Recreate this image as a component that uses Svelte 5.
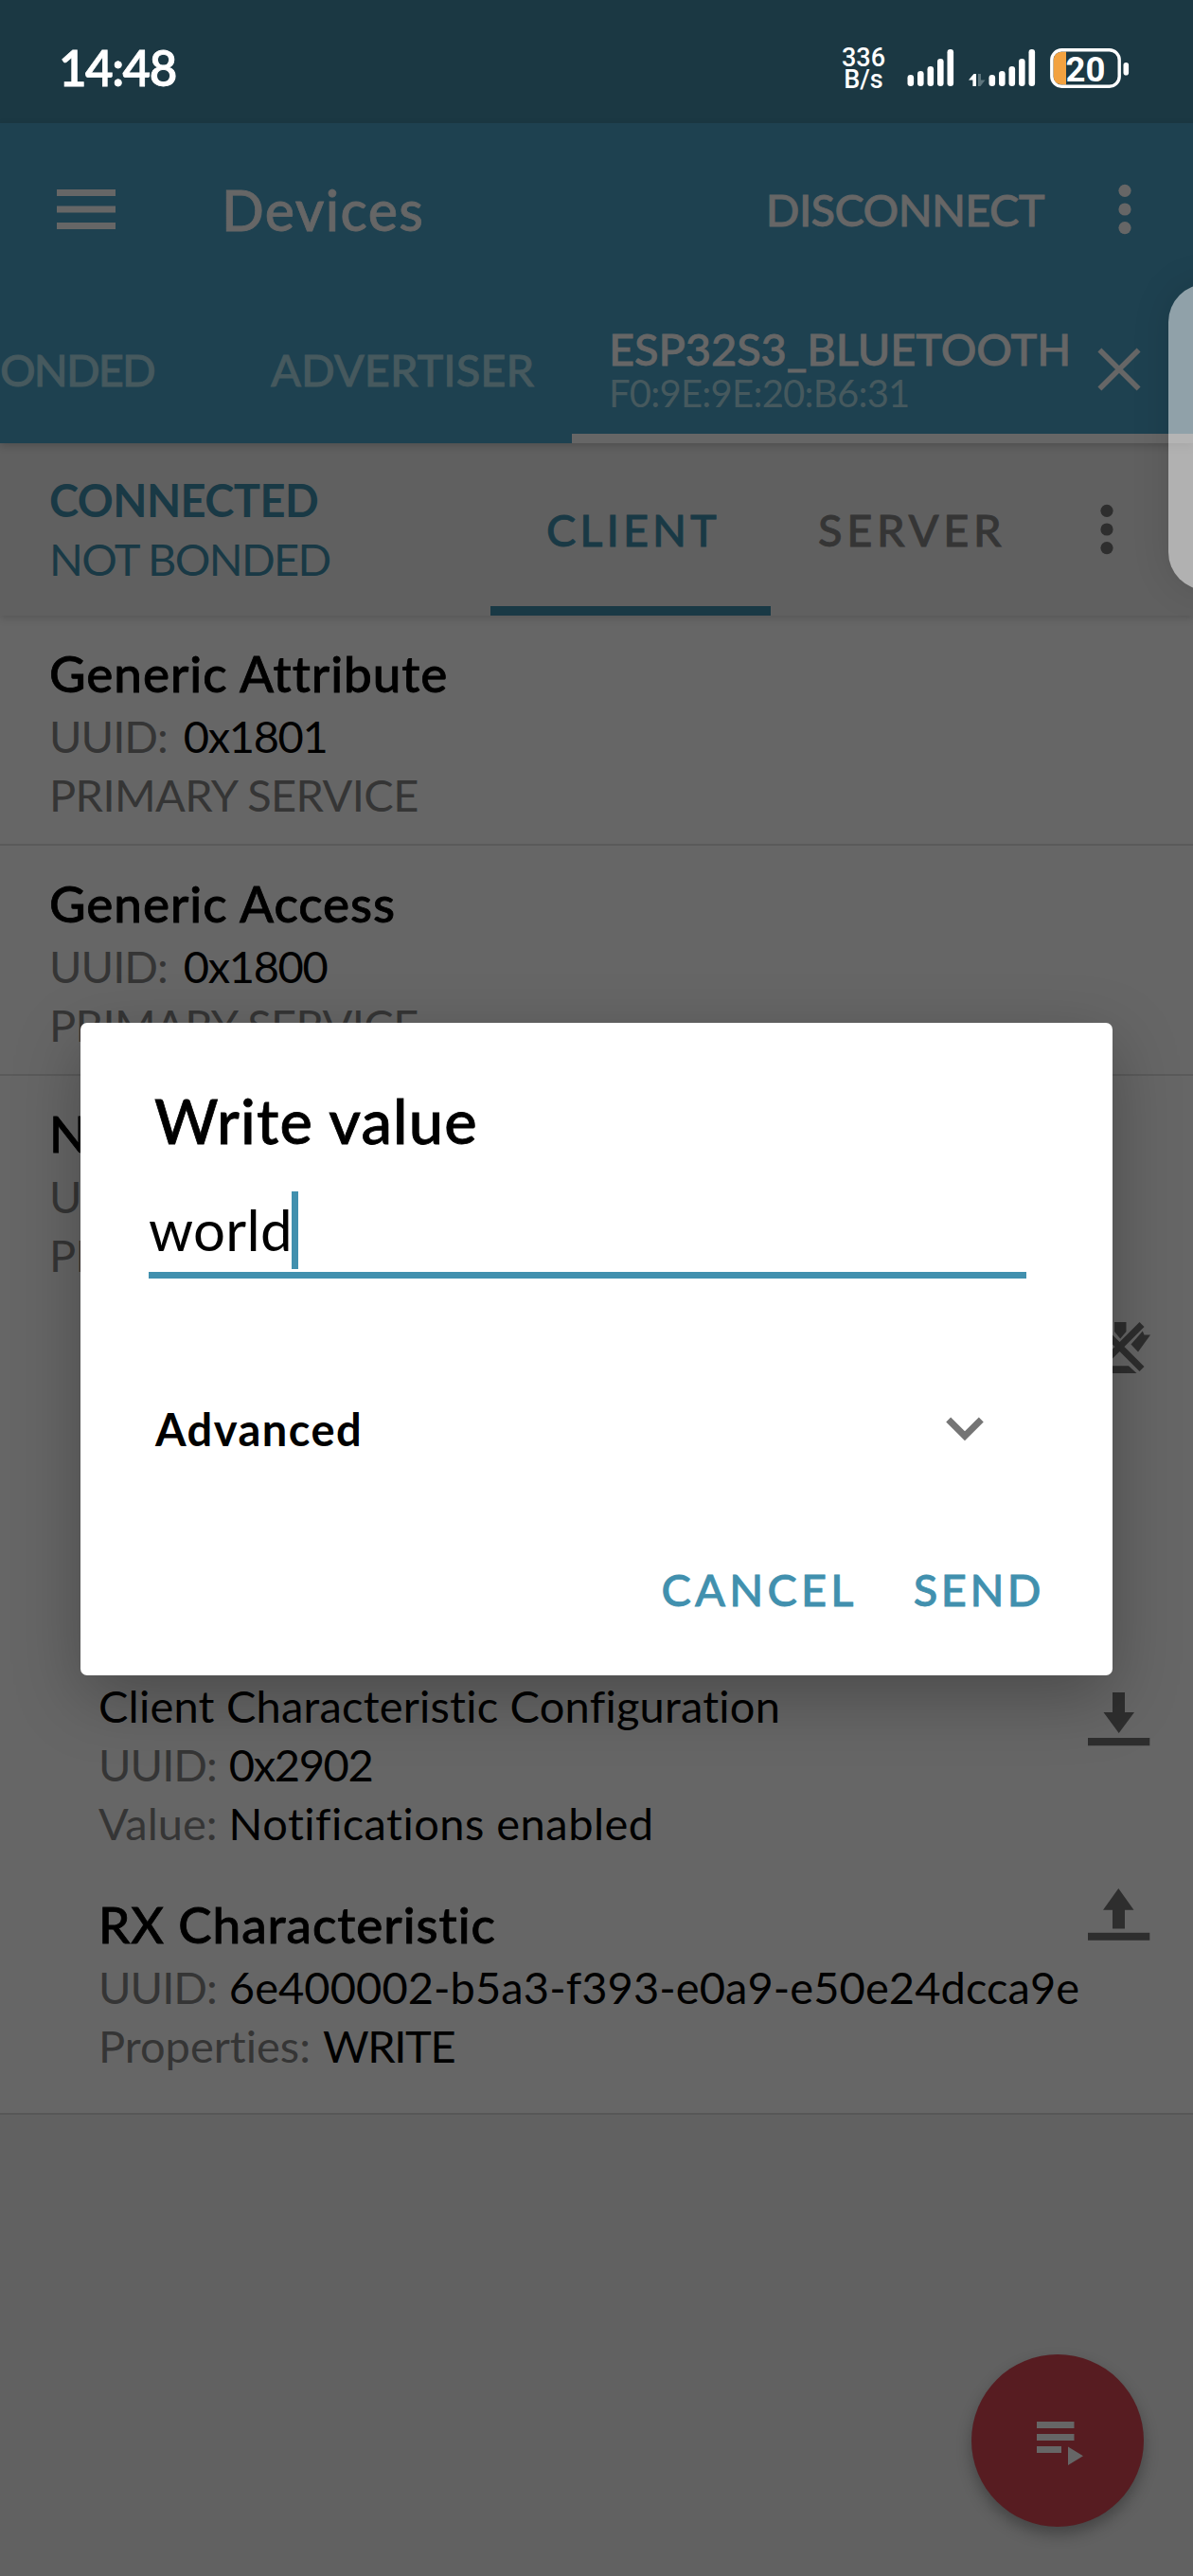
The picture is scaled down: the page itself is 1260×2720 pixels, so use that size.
<script>
  const services = [
    { name: 'Generic Attribute', uuid: '0x1801' },
    { name: 'Generic Access', uuid: '0x1800' }
  ];
  // Signal bars: [x, top] on a 40px tall grid
  const bars = [[0.5, 28], [11, 24], [21.5, 19], [32, 11], [42.5, 1]];
</script>

{#snippet signal()}
  <svg class="signal" width="50" height="40" viewBox="0 0 50 40">
    {#each bars as [x, y]}
      <rect {x} {y} width="6.6" height={40 - y} rx="3.2" fill="#fff" />
    {/each}
  </svg>
{/snippet}

{#snippet kebab(color)}
  <svg width="14" height="54" viewBox="0 0 14 54" fill={color}>
    <circle cx="7" cy="7.3" r="6.6" />
    <circle cx="7" cy="27" r="6.6" />
    <circle cx="7" cy="46.6" r="6.6" />
  </svg>
{/snippet}

<div class="screen">
  <div class="status">
    <span class="clock">14:48</span>
    <div class="net"><span>336</span><span>B/s</span></div>
    {@render signal()}
    <svg class="data" width="18" height="40" viewBox="0 0 18 40">
      <path d="M0 33.5 L5.5 27 H8 V40 H4.4 V33.5 Z" fill="#fff" />
      <path d="M10 27 H13 V33.5 H17.5 L12.5 40 H10 Z" fill="#5d747c" />
    </svg>
    {@render signal()}
    <svg class="battery" width="84" height="44" viewBox="0 0 84 44">
      <path d="M17 5.5 V40.5 H14 Q3.5 40.5 3.5 30 V16 Q3.5 5.5 14 5.5 Z" fill="#f2a240" />
      <rect x="1.8" y="3.8" width="71.4" height="38.4" rx="10.5" fill="none" stroke="#fff" stroke-width="3.4" />
      <rect x="77.5" y="17" width="5.6" height="13.5" rx="2.8" fill="#fff" />
      <text x="16.5" y="36.5">20</text>
    </svg>
  </div>

  <header>
    <div class="appbar">
      <svg width="62" height="42" viewBox="0 0 62 42" fill="#666">
        <rect width="62" height="7" />
        <rect y="17.5" width="62" height="7" />
        <rect y="35" width="62" height="7" />
      </svg>
      <h1>Devices</h1>
      <span class="disconnect">DISCONNECT</span>
      {@render kebab('#666')}
    </div>
    <nav>
      <span class="tab bonded">ONDED</span>
      <span class="tab advertiser">ADVERTISER</span>
      <div class="device">
        <div>
          <div class="device-name">ESP32S3_BLUETOOTH</div>
          <div class="mac">F0:9E:9E:20:B6:31</div>
        </div>
        <svg width="46" height="46" viewBox="0 0 46 46" stroke="#666" stroke-width="5.6">
          <path d="M2.4 2.4 L43.6 43.6 M43.6 2.4 L2.4 43.6" />
        </svg>
      </div>
    </nav>
  </header>

  <section class="subbar">
    <div class="state">
      <div class="connected">CONNECTED</div>
      <div class="not-bonded">NOT BONDED</div>
    </div>
    <div class="role client">CLIENT</div>
    <div class="role server">SERVER</div>
    {@render kebab('#2e2e2e')}
  </section>

  <main>
    {#each services as s}
      <article class="service">
        <h2>{s.name}</h2>
        <p class="row wide"><span class="label uu">UUID:</span><span class="short">{s.uuid}</span></p>
        <p class="label primary">PRIMARY SERVICE</p>
      </article>
    {/each}
    <article class="service open">
      <h2>Nordic UART Service</h2>
      <p class="row wide"><span class="label uu">UUID:</span></p>
      <p class="label primary">PRIMARY SERVICE</p>
    </article>

    <div class="notify">
      <svg width="66" height="58" viewBox="0 0 66 58" fill="#2e2e2e">
        <path d="M28 4 H40.5 V14 L34.2 21.5 L28 14 Z" />
        <path d="M57.8 13.5 L59.5 17.5 H66 L53 35.5 L45.5 27.5 Z" />
        <path d="M0 50.3 H43 L51.5 58 H0 Z" />
        <path d="M8 5 L57 54 M57 7 L8 56" stroke="#2e2e2e" stroke-width="7" transform="translate(0,-0.5)" />
      </svg>
    </div>

    <div class="attr">
      <div>
        <p class="descriptor">Client Characteristic Configuration</p>
        <p class="row"><span class="label uu">UUID:</span><span class="short">0x2902</span></p>
        <p class="row value"><span class="label">Value:</span><span class="note">Notifications enabled</span></p>
      </div>
      <svg class="down" width="66" height="57" viewBox="0 0 66 57" fill="#2e2e2e">
        <path d="M26 0 H39 V21 H49 L32.7 43 L16.5 21 H26 Z" />
        <rect y="48" width="65.3" height="8.2" />
      </svg>
    </div>

    <div class="attr rx">
      <div>
        <h2>RX Characteristic</h2>
        <p class="row"><span class="label uu">UUID:</span><span class="long">6e400002-b5a3-f393-e0a9-e50e24dcca9e</span></p>
        <p class="row"><span class="label">Properties:</span><span class="short">WRITE</span></p>
      </div>
      <svg class="up" width="66" height="56" viewBox="0 0 66 56" fill="#2e2e2e">
        <path d="M32.3 0 L48.5 22.7 H39 V42.5 H26 V22.7 H16 Z" />
        <rect y="46.8" width="65.3" height="8" />
      </svg>
    </div>
  </main>

  <div class="fab">
    <svg width="50" height="47" viewBox="0 0 50 47" fill="#666">
      <rect width="39.5" height="7" />
      <rect y="13" width="39.5" height="7" />
      <rect y="26" width="26" height="7" />
      <path d="M33 26.5 L49 36.2 L33 46 Z" />
    </svg>
  </div>

  <div class="edge-panel"></div>

  <div class="dialog">
    <h3>Write value</h3>
    <div class="field"><span>world</span><i class="cursor"></i></div>
    <div class="advanced">
      <span>Advanced</span>
      <svg width="40" height="26" viewBox="0 0 40 26" fill="none" stroke="#757575" stroke-width="7">
        <path d="M2.7 3 L20 20.3 L37.3 3" />
      </svg>
    </div>
    <div class="actions"><span class="cancel">CANCEL</span><span class="send">SEND</span></div>
  </div>
</div>

<style>
  :global(body) { margin: 0; }
  .screen {
    position: relative;
    width: 1260px;
    height: 2720px;
    overflow: hidden;
    background: #616161;
    font-family: Lato, "Liberation Sans", sans-serif;
    font-size: 47px;
    line-height: 62px;
    font-variant-ligatures: none;
    color: #000;
    white-space: nowrap;
  }
  h1, h2, h3, p { margin: 0; font-weight: 500; }
  p { font-weight: 400; }
  svg { display: block; flex: none; }

  /* Medium weight, slightly thickened */
  h1, h2, h3, .clock, .disconnect, .tab, .device-name, .role, .actions {
    -webkit-text-stroke: .8px currentColor;
  }

  .status {
    display: flex;
    align-items: center;
    box-sizing: border-box;
    height: 130px;
    padding: 12px 67px 0 62px;
    background: #1b3843;
    color: #fff;
  }
  .clock { padding-top: 2px; font-size: 51px; font-weight: 600; letter-spacing: -1.5px; }
  .net {
    display: flex;
    flex-direction: column;
    align-items: center;
    width: 46px;
    margin-left: auto;
    margin-right: 23px;
    padding-top: 3px;
    font: 500 27px/23px Roboto, sans-serif;
  }
  .data { margin: 0 3px 0 15px; }
  .battery { margin-left: 15px; }
  .battery text { font: 700 36.5px Roboto, sans-serif; fill: #fff; }

  header {
    position: relative;
    z-index: 2;
    height: 338px;
    background: #1e4150;
    color: #666;
    box-shadow: 0 3px 8px rgba(0, 0, 0, .18);
  }
  .appbar {
    display: flex;
    align-items: center;
    height: 182px;
    padding: 0 65px 0 60px;
  }
  h1 { margin-left: 112px; padding-top: 2px; font-size: 59px; letter-spacing: 1.4px; }
  .disconnect { margin-left: auto; margin-right: 78px; font-weight: 500; letter-spacing: -.64px; }
  nav { display: flex; height: 156px; }
  .tab { line-height: 156px; font-weight: 500; color: #46595e; }
  .bonded { width: 286px; letter-spacing: -1.89px; }
  .advertiser { width: 318px; }
  .device {
    display: flex;
    flex: 1;
    align-items: center;
    justify-content: space-between;
    box-sizing: border-box;
    padding: 10px 55px 0 39px;
    border-bottom: 10px solid #666;
  }
  .device-name { font-weight: 500; line-height: 50px; letter-spacing: -.1px; }
  .mac { font-size: 40px; line-height: 45px; letter-spacing: -.75px; color: #46595e; }

  .subbar {
    position: relative;
    z-index: 1;
    display: flex;
    align-items: center;
    box-sizing: border-box;
    height: 182px;
    padding: 0 84px 0 52px;
    background: #606060;
    color: #193945;
    box-shadow: 0 3px 8px rgba(0, 0, 0, .15);
  }
  .subbar > svg { margin-left: auto; }
  .state { width: 466px; }
  .connected { font-weight: 700; letter-spacing: -.55px; }
  .not-bonded { letter-spacing: -1.62px; }
  .role { box-sizing: border-box; height: 182px; line-height: 182px; font-weight: 500; }
  .client { width: 296px; padding-left: 59px; letter-spacing: 4px; border-bottom: 10px solid #193945; }
  .server { padding-left: 50px; letter-spacing: 4.69px; color: #353535; }

  main { height: 1581px; background: #666; border-bottom: 2px solid #575757; }
  .service { height: 213px; padding: 28px 0 0 52px; border-bottom: 2px solid #5a5a5a; }
  .open { height: 192px; border: 0; }
  h2 { margin-bottom: 2px; font-size: 53px; line-height: 66px; letter-spacing: .95px; }
  .label { color: #353535; }
  .uu { letter-spacing: -1px; }
  .primary { letter-spacing: -.6px; }
  .row { display: flex; gap: 13px; }
  .wide { gap: 17px; }
  .value { gap: 12px; }
  .short { letter-spacing: -1.35px; }
  .descriptor { letter-spacing: .22px; }
  .note { letter-spacing: .47px; }
  .long { letter-spacing: .08px; }
  .notify { display: flex; justify-content: flex-end; box-sizing: border-box; height: 414px; padding: 36px 45px 0 0; }
  .attr { display: flex; justify-content: space-between; align-items: flex-start; padding: 0 45px 0 104px; }
  .down { margin-top: 17px; }
  .rx { margin-top: 42.5px; }
  .rx .up { margin-top: -4.5px; margin-left: -40px; }

  .fab {
    position: absolute;
    left: 1026px;
    top: 2486px;
    display: flex;
    align-items: center;
    justify-content: center;
    box-sizing: border-box;
    width: 182px;
    height: 182px;
    padding: 7px 0 0 6px;
    border-radius: 50%;
    background: #571c21;
    box-shadow: 0 8px 16px rgba(0, 0, 0, .3);
  }
  .edge-panel {
    position: absolute;
    z-index: 3;
    left: 1234px;
    top: 300px;
    width: 80px;
    height: 323px;
    border-radius: 50px;
    background: rgba(255, 255, 255, .51);
    box-shadow: 0 0 40px rgba(0, 0, 0, .12);
  }

  .dialog {
    position: absolute;
    z-index: 4;
    left: 85px;
    top: 1080px;
    box-sizing: border-box;
    width: 1090px;
    height: 689px;
    padding: 63px 72px 0;
    border-radius: 7px;
    background: #fff;
    box-shadow: 0 22px 70px rgba(0, 0, 0, .27);
  }
  h3 { padding-left: 6px; font-size: 65px; line-height: 80px; letter-spacing: 1.2px; }
  .field {
    display: flex;
    width: 927px;
    height: 85px;
    margin-top: 35px;
    border-bottom: 7px solid #4190ae;
    font-size: 60px;
    line-height: 80px;
    letter-spacing: .32px;
  }
  .cursor { width: 7px; height: 82px; margin-left: -1px; background: #4190ae; }
  .advanced {
    display: flex;
    align-items: center;
    justify-content: space-between;
    margin-top: 128px;
    padding: 0 64px 0 7px;
    font-weight: 700;
    letter-spacing: 1.47px;
  }
  .actions {
    display: flex;
    justify-content: flex-end;
    gap: 59px;
    margin-top: 107px;
    font-weight: 500;
    color: #4190ae;
  }
  .cancel { letter-spacing: 4.24px; }
  .send { letter-spacing: 3.44px; }
</style>
